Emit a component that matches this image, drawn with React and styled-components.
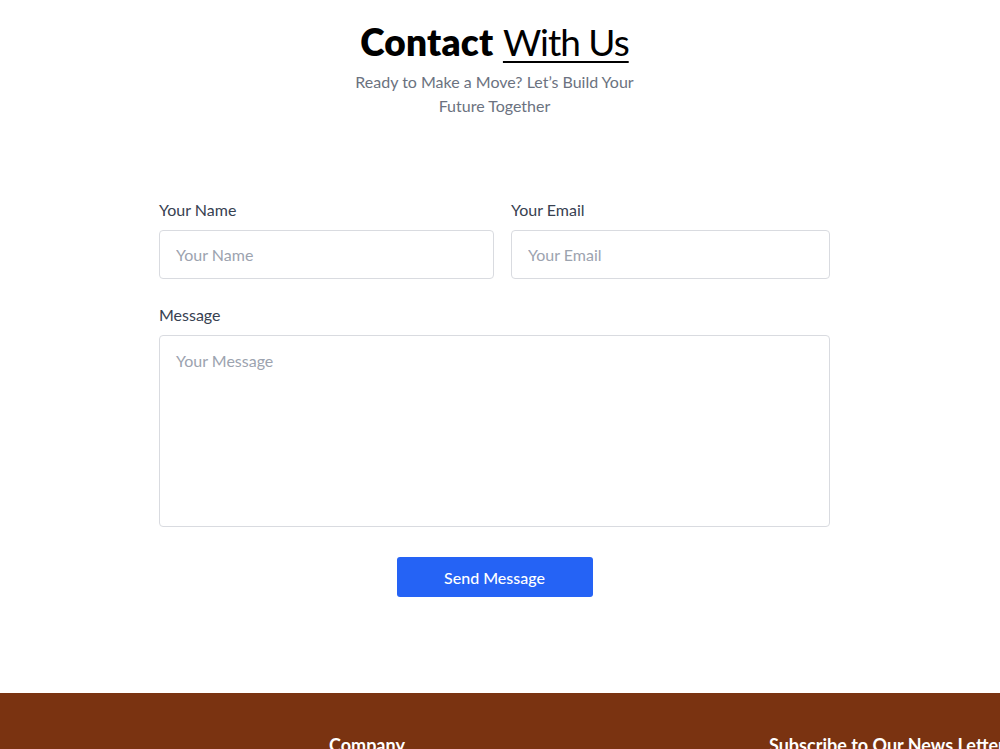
import React from "react";
import styled, { createGlobalStyle } from "styled-components";

const Global = createGlobalStyle`
  * { box-sizing: border-box; }
  body {
    margin: 0;
    background: #ffffff;
    font-family: "Lato", "Noto Sans", sans-serif;
    overflow: hidden;
  }
`;

const Page = styled.div`
  display: flex;
  flex-direction: column;
  min-height: 749px;
`;

const Section = styled.section`
  display: flex;
  flex-direction: column;
  align-items: center;
  padding: 20px 11px 96px 0;
`;

const Title = styled.h2`
  margin: 0;
  font-size: 37px;
  line-height: 44px;
  font-weight: 400;
  color: #000;
`;

const Strong = styled.span`
  font-weight: 800;
  letter-spacing: 0.2px;
`;

const Underlined = styled.span`
  text-decoration: underline;
  text-decoration-thickness: 2px;
  text-underline-offset: 5px;
  letter-spacing: -1px;
`;

const Subtitle = styled.p`
  margin: 6px 0 0;
  width: 300px;
  text-align: center;
  font-size: 16px;
  line-height: 24px;
  color: #6b7280;
`;

const Form = styled.form`
  width: 671px;
  margin-top: 80px;
  display: flex;
  flex-direction: column;
  gap: 24px;
`;

const Row = styled.div`
  display: grid;
  grid-template-columns: 335px 1fr;
  gap: 17px;
`;

const Field = styled.div`
  display: flex;
  flex-direction: column;
  gap: 8px;
`;

const Label = styled.label`
  font-size: 16px;
  line-height: 24px;
  color: #374151;
`;

const Input = styled.input`
  height: 49px;
  border: 1px solid #d9dbe0;
  border-radius: 4px;
  padding: 0 16px;
  font-family: inherit;
  font-size: 16px;
  color: #374151;
  outline: none;
  &::placeholder { color: #9ca3af; }
`;

const TextArea = styled.textarea`
  height: 192px;
  border: 1px solid #d9dbe0;
  border-radius: 4px;
  padding: 14px 16px;
  font-family: inherit;
  font-size: 16px;
  line-height: 22px;
  resize: none;
  outline: none;
  &::placeholder { color: #9ca3af; }
`;

const Actions = styled.div`
  display: flex;
  justify-content: center;
  margin-top: 6px;
`;

const Button = styled.button`
  width: 196px;
  height: 40px;
  border: none;
  border-radius: 3px;
  background: #2563f5;
  color: #fff;
  font-family: inherit;
  font-size: 16px;
  font-weight: 500;
  cursor: pointer;
`;

const Footer = styled.footer`
  background: #7a3311;
  padding: 40px 0 40px 0;
  display: grid;
  grid-template-columns: 329px 440px 1fr;
  flex: 1;
`;

const FooterCol = styled.div`
  display: flex;
  flex-direction: column;
`;

const FooterHeading = styled.h4`
  margin: 0;
  font-size: 18px;
  line-height: 24px;
  font-weight: 700;
  color: #fff;
  white-space: nowrap;
`;

export default function App() {
  return (
    <Page>
      <Global />
      <Section>
        <Title>
          <Strong>Contact</Strong> <Underlined>With Us</Underlined>
        </Title>
        <Subtitle>Ready to Make a Move? Let’s Build Your Future Together</Subtitle>
        <Form onSubmit={(e) => e.preventDefault()}>
          <Row>
            <Field>
              <Label>Your Name</Label>
              <Input placeholder="Your Name" />
            </Field>
            <Field>
              <Label>Your Email</Label>
              <Input placeholder="Your Email" />
            </Field>
          </Row>
          <Field>
            <Label>Message</Label>
            <TextArea placeholder="Your Message" />
          </Field>
          <Actions>
            <Button type="submit">Send Message</Button>
          </Actions>
        </Form>
      </Section>
      <Footer>
        <FooterCol />
        <FooterCol>
          <FooterHeading>Company</FooterHeading>
        </FooterCol>
        <FooterCol>
          <FooterHeading>Subscribe to Our News Letter</FooterHeading>
        </FooterCol>
      </Footer>
    </Page>
  );
}
